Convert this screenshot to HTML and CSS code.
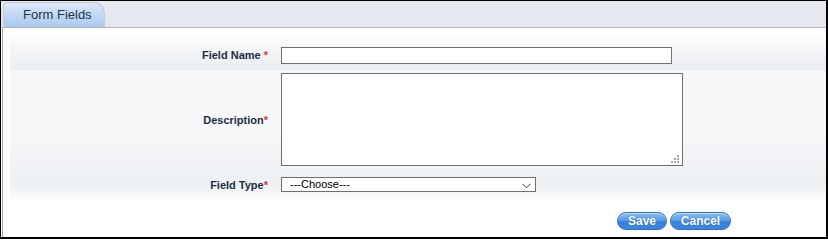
FILE: index.html
```html
<!DOCTYPE html>
<html>
<head>
<meta charset="utf-8">
<link rel="stylesheet" href="styles.css">
</head>
<body>
<div class="frame">
  <div class="tabbar">
    <div class="tab">Form Fields</div>
  </div>
  <div class="panel">
    <div class="form">
      <div class="row row-name">
        <label class="lbl">Field Name <span class="req">*</span></label>
        <div class="ctl"><input class="txt" type="text"></div>
      </div>
      <div class="row row-desc">
        <label class="lbl">Description<span class="req">*</span></label>
        <div class="ctl">
          <div class="ta-wrap">
            <textarea class="ta"></textarea>
            <svg class="grip" width="8" height="8" viewBox="0 0 8 8">
              <rect x="6" y="0" width="2" height="2" fill="#a8a8a8"/>
              <rect x="3" y="3" width="2" height="2" fill="#a8a8a8"/>
              <rect x="6" y="3" width="2" height="2" fill="#a8a8a8"/>
              <rect x="0" y="6" width="2" height="2" fill="#a8a8a8"/>
              <rect x="3" y="6" width="2" height="2" fill="#a8a8a8"/>
              <rect x="6" y="6" width="2" height="2" fill="#a8a8a8"/>
            </svg>
          </div>
        </div>
      </div>
      <div class="row row-type">
        <label class="lbl">Field Type<span class="req">*</span></label>
        <div class="ctl">
          <div class="sel-wrap">
            <select class="sel"><option>---Choose---</option></select>
            <svg class="chev" width="9" height="6" viewBox="0 0 9 6">
              <path d="M0.5 0.8 L4.5 4.8 L8.5 0.8" fill="none" stroke="#333" stroke-width="1"/>
            </svg>
          </div>
        </div>
      </div>
    </div>
    <div class="actions">
      <button class="btn btn-save">Save</button>
      <button class="btn btn-cancel">Cancel</button>
    </div>
  </div>
</div>
</body>
</html>
```
FILE: styles.css
```css
* { box-sizing: border-box; }
html, body { margin: 0; padding: 0; background: #fff; }
body { font-family: "Liberation Sans", Arial, sans-serif; }

.frame {
  width: 828px;
  height: 239px;
  border-top: 1px solid #000;
  border-left: 1px solid #000;
  border-right: 2px solid #000;
  border-bottom: 2px solid #000;
  display: flex;
  flex-direction: column;
  background: #fff;
}

.tabbar {
  height: 27px;
  background: #e5e9ef;
  border-bottom: 1px solid #b2b6ba;
  display: flex;
  align-items: flex-end;
  padding-left: 2px;
}
.tab {
  width: 102px;
  height: 25px;
  border: 1px solid #c4ccd6;
  border-bottom: none;
  border-radius: 4px 11px 0 0;
  background: linear-gradient(to bottom, #dbe7f6 0%, #c4d9f3 45%, #abc9ef 100%);
  color: #1e3550;
  font-size: 13px;
  line-height: 23px;
  padding-left: 19px;
}

.panel {
  flex: 1;
  margin-left: 1px;
  border-left: 1px solid #a3a7ab;
  display: flex;
  flex-direction: column;
}

.form {
  margin-top: 9px;
  margin-left: 7px;
}
.row {
  display: grid;
  grid-template-columns: 258px 1fr;
  column-gap: 13px;
  align-items: center;
}
.row-name {
  height: 33px;
  padding-top: 3px;
  background: linear-gradient(to bottom, #fbfcfd 0%, #f4f6f8 35%, #eaedf1 100%);
}
.row-desc {
  height: 99px;
  background: linear-gradient(to bottom, #f6f7f9 0%, #f6f7f9 65%, #f0f2f5 100%);
}
.row-type {
  height: 31px;
  background: linear-gradient(to bottom, #eef1f4 0%, #eef1f4 55%, #fbfcfd 100%);
}

.lbl {
  text-align: right;
  font-size: 11px;
  font-weight: bold;
  color: #1c2e44;
}
.req { color: #e8322a; }

.ctl { display: flex; align-items: center; }

.txt {
  width: 391px;
  height: 17px;
  margin: 0;
  border: 1px solid #6f6f6f;
  background: #fff;
  padding: 0 2px;
  font-size: 11px;
  outline: none;
}

.ta-wrap { position: relative; width: 402px; height: 93px; }
.ta {
  display: block;
  width: 402px;
  height: 93px;
  margin: 0;
  border: 1px solid #6f6f6f;
  background: #fff;
  resize: none;
  outline: none;
}
.grip { position: absolute; right: 4px; bottom: 3px; }

.sel-wrap { position: relative; width: 255px; height: 15px; }
.sel {
  appearance: none;
  -webkit-appearance: none;
  display: block;
  width: 255px;
  height: 15px;
  margin: 0;
  border: 1px solid #6f6f6f;
  border-radius: 0;
  background: #fff;
  font-family: "Liberation Sans", Arial, sans-serif;
  font-size: 11px;
  line-height: 13px;
  padding: 0 0 0 8px;
  color: #000;
  outline: none;
}
.chev { position: absolute; right: 5px; top: 6px; }

.actions {
  display: flex;
  justify-content: flex-end;
  gap: 3px;
  padding-right: 95px;
  margin-top: 12px;
}
.btn {
  height: 18px;
  margin: 0;
  padding: 0;
  border: 1px solid #2c6fc4;
  border-radius: 9px;
  background: linear-gradient(to bottom, #8cbdf2 0%, #5c9de6 45%, #3a82dc 55%, #3b86e0 100%);
  color: #fff;
  font-family: "Liberation Sans", Arial, sans-serif;
  font-size: 12px;
  font-weight: bold;
  line-height: 16px;
  text-shadow: 0 0 1px #1c4f95;
  box-shadow: inset 0 1px 0 rgba(255,255,255,0.5);
}
.btn-save { width: 50px; }
.btn-cancel { width: 61px; }
```
